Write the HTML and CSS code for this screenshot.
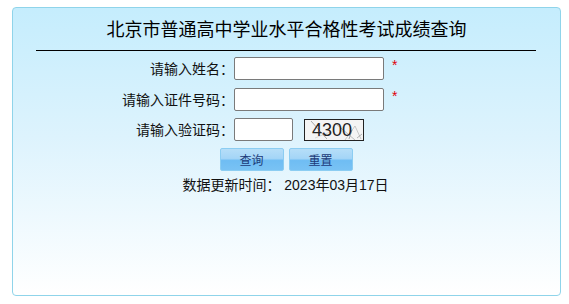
FILE: index.html
```html
<!DOCTYPE html>
<html lang="zh-CN">
<head>
<meta charset="utf-8">
<title>北京市普通高中学业水平合格性考试成绩查询</title>
<link rel="stylesheet" href="styles.css">
</head>
<body>
<div class="panel">
  <div class="title">北京市普通高中学业水平合格性考试成绩查询</div>
  <div class="rule"></div>
  <form class="form">
    <label class="label" for="xm">请输入姓名：</label>
    <div class="field"><input class="input" id="xm" type="text"><span class="star">*</span></div>
    <label class="label" for="zj">请输入证件号码：</label>
    <div class="field"><input class="input" id="zj" type="text"><span class="star">*</span></div>
    <label class="label" for="yzm">请输入验证码：</label>
    <div class="field">
      <input class="input small" id="yzm" type="text">
      <span class="captcha">
        <svg class="noise" width="58" height="20" viewBox="0 0 58 20">
          <path d="M6 1 L22 19" stroke="#888" stroke-width="0.7" fill="none"/>
          <path d="M30 3 L50 20" stroke="#999" stroke-width="0.6" fill="none"/>
          <path d="M40 20 L50 6 L56 19" stroke="#aaa" stroke-width="0.6" fill="none"/>
          <path d="M44 19 L47 10" stroke="#777" stroke-width="0.6" fill="none"/>
          <path d="M10 18 L25 12" stroke="#bbb" stroke-width="0.5" fill="none"/>
          <path d="M52 18 L57 14" stroke="#888" stroke-width="0.6" fill="none"/>
        </svg>
        <span class="code">4300</span>
      </span>
    </div>
  </form>
  <div class="buttons">
    <button class="btn" type="button">查询</button>
    <button class="btn" type="button">重置</button>
  </div>
  <div class="update">数据更新时间：&nbsp;2023年03月17日</div>
</div>
</body>
</html>
```
FILE: styles.css
```css
html, body {
  margin: 0;
  padding: 0;
  background: #fff;
}
body {
  font-family: "Liberation Sans", "Noto Sans CJK SC", sans-serif;
  color: #111;
  padding: 7px 8px 0 12px;
}
.panel {
  box-sizing: border-box;
  width: 549px;
  height: 289px;
  border: 1px solid #8fd4ea;
  border-radius: 4px;
  background: linear-gradient(to bottom, #c5edfd 0%, #ddf3fd 45%, #ffffff 100%);
}
.title {
  height: 40px;
  line-height: 40px;
  text-align: center;
  font-family: "Noto Sans CJK SC", sans-serif;
  font-size: 18px;
  color: #000;
}
.rule {
  height: 1px;
  background: #000;
  margin: 2px 24px 0 23px;
}
.form {
  display: grid;
  grid-template-columns: 221px 1fr;
  row-gap: 7.5px;
  margin: 6px 0 0 0;
}
.label {
  font-size: 14px;
  line-height: 23px;
  height: 23px;
  text-align: right;
  color: #111;
  font-family: "Noto Sans CJK SC", sans-serif;
}
.field {
  display: flex;
  align-items: center;
  height: 23px;
}
.input {
  box-sizing: border-box;
  width: 150px;
  height: 23px;
  border: 1px solid #7a7a7a;
  border-radius: 2px;
  background: #fff;
  margin: 0;
  padding: 0 3px;
}
.input.small {
  width: 59px;
}
.star {
  color: #e0000a;
  font-size: 14px;
  margin-left: 8px;
  line-height: 14px;
  align-self: flex-start;
  margin-top: 1px;
}
.captcha {
  position: relative;
  box-sizing: border-box;
  width: 60px;
  height: 22px;
  margin-left: 11px;
  border: 1px solid #222;
  background: #f4f4f4;
  display: flex;
  align-items: center;
  justify-content: center;
}
.noise {
  position: absolute;
  left: 0;
  top: 0;
}
.code {
  position: relative;
  font-family: "Liberation Sans", sans-serif;
  font-size: 18px;
  line-height: 20px;
  color: #222;
  margin-left: -4px;
}
.buttons {
  display: flex;
  justify-content: center;
  gap: 5px;
  margin-top: 7px;
  padding-right: 1px;
}
.btn {
  box-sizing: border-box;
  width: 64px;
  height: 23px;
  border: 1px solid #8ccdf2;
  border-radius: 2px;
  background: linear-gradient(to bottom, #b6def8 0%, #a4d5f7 45%, #6fbdf3 55%, #79c2f4 100%);
  color: #1c3a78;
  font-family: "Noto Sans CJK SC", sans-serif;
  font-size: 12px;
  line-height: 21px;
  padding: 0;
  margin: 0;
}
.update {
  margin-top: 4px;
  text-align: center;
  font-size: 14px;
  line-height: 20px;
  color: #111;
  padding-right: 2px;
}
```
